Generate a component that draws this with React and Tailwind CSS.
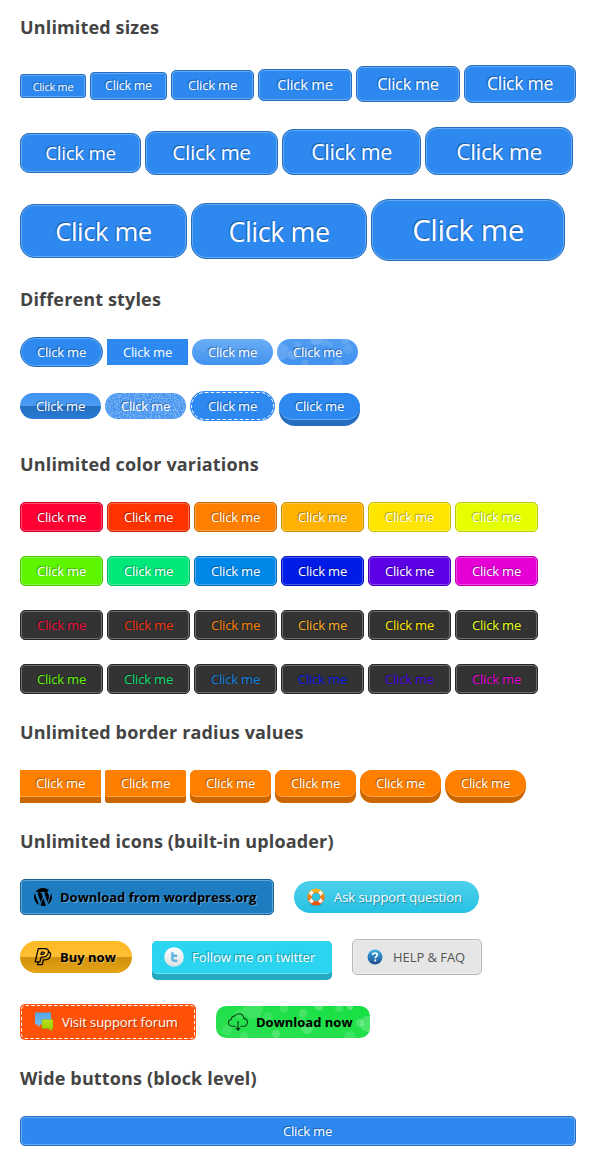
import React from 'react';

const SHADE = '[text-shadow:-1px_-1px_1px_rgba(0,0,0,0.35)]';
const BEVEL = 'border shadow-[inset_0_0_0_1px_rgba(255,255,255,0.28)]';
const BLUE = 'bg-[#2d89ef] border-[#246ebf] text-white';
const TIGHT = 'tracking-[-0.014em]';

function Heading({ children }) {
  return (
    <h2 className="mt-[26px] mb-[26px] h-6 whitespace-nowrap text-[18px] leading-6 font-bold tracking-[0.15px] text-[#444444]">
      {children}
    </h2>
  );
}

function Button({ className = '', align = 'justify-center', label = 'Click me', shade = SHADE, tracking = TIGHT, children }) {
  return (
    <button className={`relative flex shrink-0 items-center whitespace-nowrap ${align} ${className}`}>
      {children}
      <span className={`relative pt-[2px] ${tracking} ${shade}`}>{label}</span>
    </button>
  );
}

function RaisedButton({ outer, face, align = 'justify-center', label = 'Click me', shade = SHADE, tracking = TIGHT, children }) {
  return (
    <button className={`flex shrink-0 flex-col items-stretch whitespace-nowrap ${outer}`}>
      <span className={`flex w-full items-center border-b ${align} ${face}`}>
        {children}
        <span className={`pt-[2px] ${tracking} ${shade}`}>{label}</span>
      </span>
    </button>
  );
}

const sizes = [
  [
    'w-[66px] h-6 rounded-[3px] mb-[5px] text-[10.8px]',
    'w-[77px] h-7 rounded-[4px] mb-[3px] pb-[2px] text-[12.4px]',
    'w-[83px] h-[30px] rounded-[5px] mb-[3px] text-[13px]',
    'w-[94px] h-8 rounded-[6px] mb-[2px] pb-[3px] text-[14.7px]',
    'w-[104px] h-9 rounded-[7px] mb-px pb-[1px] text-[16.3px]',
    'w-[112px] h-[38px] rounded-[8px] pb-[3px] text-[17.5px]',
  ],
  [
    'w-[121px] h-10 rounded-[9px] mb-[2px] pb-[2px] text-[18.7px]',
    'w-[133px] h-11 rounded-[10px] pb-[2px] text-[20.8px]',
    'w-[139px] h-[46px] rounded-[11px] pb-[2px] text-[21.4px]',
    'w-[148px] h-12 rounded-[12px] text-[22.7px]',
  ],
  [
    'w-[167px] h-[54px] rounded-[14px] mb-[3px] text-[25.6px]',
    'w-[176px] h-14 rounded-[15px] mb-[2px] text-[26.8px]',
    'w-[194px] h-[62px] rounded-[18px] pb-[2px] text-[29.6px]',
  ],
];

const colors = [
  [
    'bg-[#ff0033] border-[#cc0029] text-white',
    'bg-[#ff3300] border-[#cc2900] text-white',
    'bg-[#ff8000] border-[#cc6600] text-white',
    'bg-[#ffb300] border-[#cc8f00] text-white',
    'bg-[#ffe600] border-[#ccb800] text-white',
    'bg-[#e6ff00] border-[#b8cc00] text-white',
  ],
  [
    'bg-[#5ef500] border-[#4bc400] text-white',
    'bg-[#00e87a] border-[#00ba62] text-white',
    'bg-[#0088e8] border-[#006dba] text-white',
    'bg-[#001ce6] border-[#0016b8] text-white',
    'bg-[#5c00e6] border-[#4a00b8] text-white',
    'bg-[#e600d6] border-[#b800ab] text-white',
  ],
  [
    'bg-[#333333] border-[#292929] text-[#f00a37]',
    'bg-[#333333] border-[#292929] text-[#f03210]',
    'bg-[#333333] border-[#292929] text-[#ff8000]',
    'bg-[#333333] border-[#292929] text-[#ffad1a]',
    'bg-[#333333] border-[#292929] text-[#ffe600]',
    'bg-[#333333] border-[#292929] text-[#e6ff1a]',
  ],
  [
    'bg-[#333333] border-[#292929] text-[#5ef500]',
    'bg-[#333333] border-[#292929] text-[#10dd70]',
    'bg-[#333333] border-[#292929] text-[#1083e0]',
    'bg-[#333333] border-[#292929] text-[#101ce6]',
    'bg-[#333333] border-[#292929] text-[#4d05e0]',
    'bg-[#333333] border-[#292929] text-[#e600d6]',
  ],
];

const radii = [
  'rounded-none',
  'rounded-[3px]',
  'rounded-[6px]',
  'rounded-[8px]',
  'rounded-[12px]',
  'rounded-[18px]',
];

function Bubbles({ width, height, circles, className }) {
  return (
    <svg className={`absolute inset-0 ${className}`} width={width} height={height} viewBox={`0 0 ${width} ${height}`}>
      {circles.map(([cx, cy, r, o]) => (
        <circle key={`${cx}-${cy}`} cx={cx} cy={cy} r={r} fill="#fff" opacity={o} />
      ))}
    </svg>
  );
}

function Stitches({ width, height, radius }) {
  return (
    <svg className="absolute inset-0" width={width} height={height} fill="none">
      <rect
        x="1.5"
        y="1.5"
        width={width - 3}
        height={height - 3}
        rx={radius}
        stroke="#fff"
        strokeDasharray="3.500 2.200"
      />
    </svg>
  );
}

function Grain() {
  return (
    <svg className="absolute inset-0 rounded-full" width="81" height="26">
      <filter id="grain" x="0" y="0" width="100%" height="100%">
        <feTurbulence type="fractalNoise" baseFrequency="0.75" numOctaves="2" seed="4" />
        <feColorMatrix values="0 0 0 0 1  0 0 0 0 1  0 0 0 0 1  1.3 0 0 0 -0.56" />
      </filter>
      <rect width="81" height="26" filter="url(#grain)" />
    </svg>
  );
}

function WordPress() {
  return (
    <svg className="mr-2 shrink-0" width="18" height="18" viewBox="43 43 426 426" fill="#000">
      <path d="M61.7 169.4l101.5 278C92.2 413 43.3 340.2 43.3 256c0-30.9 6.6-60.1 18.4-86.6zm337.9 75.9c0-26.3-9.4-44.5-17.5-58.7-10.8-17.5-20.9-32.4-20.9-49.9 0-19.6 14.8-37.8 35.7-37.8.9 0 1.8.1 2.8.2-37.9-34.7-88.3-55.9-143.7-55.9-74.3 0-139.7 38.1-177.8 95.9 5 .2 9.7.3 13.7.3 22.2 0 56.7-2.7 56.7-2.7 11.5-.7 12.8 16.2 1.4 17.5 0 0-11.5 1.3-24.3 2l77.5 230.4L249.8 247l-33.1-90.8c-11.5-.7-22.3-2-22.3-2-11.5-.7-10.1-18.2 1.3-17.5 0 0 35.1 2.7 56 2.7 22.2 0 56.7-2.7 56.7-2.7 11.5-.7 12.8 16.2 1.4 17.5 0 0-11.5 1.3-24.3 2l76.9 228.7 21.2-70.9c9-29.400 16-50.500 16-68.700zm-139.900 29.300l-63.800 185.500c19.100 5.600 39.200 8.700 60.100 8.700 24.800 0 48.500-4.300 70.600-12.100-.6-.9-1.100-1.900-1.500-2.900l-65.400-179.200zm183-120.700c.9 6.800 1.400 14 1.400 21.900 0 21.600-4 45.800-16.200 76.200l-65 187.900C426.200 403 468.700 334.500 468.700 256c0-37-9.400-71.800-26-102.100z" />
    </svg>
  );
}

function Lifebuoy() {
  return (
    <svg className="mr-[9px] shrink-0" width="18" height="18" viewBox="1 1 18 18" fill="none">
      <defs>
        <linearGradient id="buoy" x1="0" y1="0" x2="0" y2="1">
          <stop offset="0" stopColor="#fbb21c" />
          <stop offset="1" stopColor="#e8540c" />
        </linearGradient>
      </defs>
      <ellipse cx="10" cy="18" rx="7" ry="1.2" fill="#0b7f99" opacity=".35" />
      <circle cx="10" cy="10" r="6.4" stroke="url(#buoy)" strokeWidth="4.4" />
      <path d="M4.200 4.900 7.100 7.800M12.900 12.200 15.800 15.100M15.800 4.900 12.900 7.800M7.100 12.200 4.200 15.100" stroke="#f4f4f2" strokeWidth="4" />
      <circle cx="10" cy="10" r="4.100" fill="#2fc6e3" stroke="#a8662c" strokeWidth=".5" />
    </svg>
  );
}

function PayPal() {
  return (
    <svg className="mr-2 shrink-0" width="18" height="20" viewBox="0 0 18 20" fill="none" stroke="#000" strokeWidth="1.250" strokeLinejoin="round">
      <path d="M4.300 1.600h6.600c2.700 0 3.900 1.500 3.500 3.900-.5 3-2.500 4.600-5.700 4.600H7.100L6 14.900H1.200z" />
      <path d="M7.500 5.100h1.700c1 0 1.300.4 1.100 1.100-.2.9-.8 1.200-1.800 1.200H7z" />
      <path d="M14.600 4.600c1.700.6 2.300 1.900 1.900 3.800-.6 2.900-2.500 4.400-5.600 4.400H9.400l-1.100 4.900H3.600l.6-2.700" />
    </svg>
  );
}

function Twitter() {
  return (
    <svg className="mr-2 shrink-0" width="20" height="20" viewBox="0 0 20 20">
      <defs>
        <linearGradient id="bird" x1="0" y1="0" x2="0" y2="1">
          <stop offset="0" stopColor="#fff" />
          <stop offset="1" stopColor="#dcdfe2" />
        </linearGradient>
      </defs>
      <circle cx="10" cy="10" r="9.800" fill="url(#bird)" />
      <path d="M8.400 6.300v5.100c0 1.600.8 2.300 2.400 2.300h1.600M8.400 8.800h3.800" fill="none" stroke="#5fb4e2" strokeWidth="2.400" strokeLinecap="round" />
    </svg>
  );
}

function Help() {
  return (
    <svg className="mr-[10px] shrink-0" width="16" height="16" viewBox="0 0 16 16">
      <defs>
        <linearGradient id="help" x1="0" y1="0" x2="0" y2="1">
          <stop offset="0" stopColor="#45b0e6" />
          <stop offset=".5" stopColor="#2a7dbd" />
          <stop offset="1" stopColor="#1c4f86" />
        </linearGradient>
      </defs>
      <circle cx="8" cy="8" r="7.500" fill="url(#help)" />
      <path d="M5.700 6.100c0-1.400 1-2.100 2.300-2.100s2.300.8 2.300 1.900c0 1.500-2 1.600-2 3.300" fill="none" stroke="#fff" strokeWidth="1.700" />
      <rect x="7.300" y="10.500" width="1.900" height="1.900" fill="#fff" />
    </svg>
  );
}

function Chat() {
  return (
    <svg className="mr-2 shrink-0" width="20" height="20" viewBox="0 0 20 20">
      <defs>
        <linearGradient id="chatBlue" x1="0" y1="0" x2="0" y2="1">
          <stop offset="0" stopColor="#56a5e6" />
          <stop offset="1" stopColor="#7cc0f0" />
        </linearGradient>
        <linearGradient id="chatGreen" x1="0" y1="0" x2="0" y2="1">
          <stop offset="0" stopColor="#b9e01a" />
          <stop offset="1" stopColor="#97cc05" />
        </linearGradient>
      </defs>
      <path d="M1 .5h16v12H6.500L4 15.500v-3H1z" fill="url(#chatBlue)" />
      <path d="M8 7.500h11v9h-1.200v2.800L14.800 16.500H8z" fill="url(#chatGreen)" stroke="#8aa61a" strokeWidth=".4" />
    </svg>
  );
}

function Cloud() {
  return (
    <svg className="relative mr-[7px] shrink-0" width="22" height="20" viewBox="0 0 22 20" fill="none" stroke="#0d3d17" strokeWidth="1.100" strokeLinecap="round" strokeLinejoin="round">
      <path d="M8.300 14.200H5.400C3 14.200 1.500 12.700 1.500 10.700c0-1.800 1.200-3.200 3-3.400C4.500 4.900 6 3.700 7.800 4c.9-1.500 2.300-2.300 4-2.300 2.800 0 4.800 1.900 5 4.700 2.200.3 3.700 1.700 3.700 3.900 0 2.300-1.600 3.900-3.900 3.900h-2.900" />
      <path d="M11 9.500v7" />
      <path d="M9 16.200h4L11 18.400z" fill="#0d3d17" />
    </svg>
  );
}

const blueBubbles = [
  [4, 13, 8, 0.14], [16, 16, 5, 0.17], [21, 6, 3.5, 0.12], [28, 24, 3.5, 0.12], [39, 0, 6, 0.17],
  [47, 3, 4, 0.1], [53, 5, 3, 0.1], [68, 1, 4, 0.12], [71, 10, 5, 0.1], [61, 25, 5, 0.12],
];
const greenBubbles = [
  [11, 24, 5, 0.1], [24, 8, 5, 0.1], [28, 30, 4, 0.13], [37, 3, 10, 0.13], [52, 11, 5, 0.1],
  [60, 28, 4, 0.2], [68, 3, 4, 0.13], [87, 7, 4, 0.18], [91, 22, 6, 0.2], [103, 0, 4.5, 0.24],
  [86, 14, 3, 0.13], [123, 2, 4, 0.16], [134, 1, 3, 0.28], [134, 31, 6, 0.13], [144, 17, 4, 0.2],
  [152, 18, 8, 0.2],
];

export default function App() {
  return (
    <main className="flow-root h-[1166px] w-[596px] overflow-hidden bg-white px-5 font-['Open_Sans','Noto_Sans',sans-serif] text-[13px]">
      <section className="-mt-[11px] flow-root">
        <Heading>Unlimited sizes</Heading>
        <div className="flex flex-col gap-6">
          {sizes.map((row, i) => (
            <div key={i} className="flex items-end gap-1">
              {row.map((size) => (
                <Button key={size} className={`${BLUE} ${BEVEL} ${size}`} />
              ))}
            </div>
          ))}
        </div>
      </section>

      <Heading>Different styles</Heading>
      <div className="flex items-center gap-1">
        <Button className={`${BLUE} ${BEVEL} h-[30px] w-[83px] rounded-full`} />
        <Button className="h-[26px] w-[81px] bg-[#2d89ef] text-white" shade="" />
        <Button className="h-[26px] w-[81px] rounded-full bg-linear-to-b from-[#6aadf5] to-[#4292f0] text-white" />
        <Button className="h-[26px] w-[81px] rounded-full bg-linear-to-b from-[#4f9df2] to-[#4292f0] text-white">
          <Bubbles className="rounded-full" width={81} height={26} circles={blueBubbles} />
        </Button>
      </div>
      <div className="mt-6 flex items-start gap-1">
        <Button className="mt-[2px] h-[26px] w-[81px] rounded-full bg-[linear-gradient(#4094f1_0,#4b9bf2_13px,#246ebf_13px,#297bd7_26px)] text-white" />
        <Button className="mt-[2px] h-[26px] w-[81px] rounded-full bg-[#4494f0] text-white">
          <Grain />
        </Button>
        <Button className="h-[30px] w-[85px] rounded-full bg-[#2d89ef] text-white">
          <Stitches width={85} height={30} radius={13.5} />
        </Button>
        <RaisedButton
          outer="mt-[2px] h-[33px] w-[81px] rounded-[16px] bg-[#246ebf]"
          face="h-[27px] rounded-[14px] border-[#6cacf4] bg-[#2d89ef] text-white"
        />
      </div>

      <Heading>Unlimited color variations</Heading>
      <div className="flex flex-col gap-6">
        {colors.map((row, i) => (
          <div key={i} className="flex gap-1">
            {row.map((color) => (
              <Button key={color} className={`h-[30px] w-[83px] rounded-[5px] ${BEVEL} ${color}`} />
            ))}
          </div>
        ))}
      </div>

      <Heading>Unlimited border radius values</Heading>
      <div className="flex gap-1">
        {radii.map((radius) => (
          <RaisedButton
            key={radius}
            outer={`h-[33px] w-[81px] bg-[#cc6600] ${radius}`}
            face={`h-[27px] border-[#ffa64d] bg-[#ff8000] text-white ${radius}`}
          />
        ))}
      </div>

      <Heading>Unlimited icons (built-in uploader)</Heading>
      <div className="flex flex-col gap-6">
        <div className="flex items-center gap-5">
          <Button
            className="h-9 w-[254px] rounded-[5px] border border-[#17649a] bg-[#1e7dc0] pl-[13px] font-bold text-black shadow-[inset_0_0_0_1px_#62a4d3]"
            align="justify-start"
            label="Download from wordpress.org"
            tracking="tracking-[-0.02px]"
            shade="[text-shadow:1px_1px_0_rgba(255,255,255,0.3)]"
          >
            <WordPress />
          </Button>
          <Button
            className="h-8 w-[185px] rounded-full bg-linear-to-b from-[#4dd0ea] to-[#22c2e4] pl-[13px] text-white"
            align="justify-start"
            label="Ask support question"
            tracking="tracking-[-0.05px]"
            shade="[text-shadow:1px_1px_1px_rgba(0,0,0,0.35)]"
          >
            <Lifebuoy />
          </Button>
        </div>
        <div className="flex items-start gap-5">
          <Button
            className="mt-[2px] h-8 w-28 rounded-full bg-[linear-gradient(#ffb923_0,#ffbe35_16px,#cf920f_16px,#e6a313_32px)] pl-[14px] font-bold text-black"
            align="justify-start"
            label="Buy now"
            tracking="tracking-normal"
            shade="[text-shadow:1px_1px_0_rgba(255,255,255,0.3)]"
          >
            <PayPal />
          </Button>
          <RaisedButton
            outer="mt-[2px] h-[39px] w-[180px] rounded-[5px] bg-[#23aabf]"
            face="h-[33px] rounded-[5px] border-[#6ce3f4] bg-[#2cd5ef] pl-3 text-white"
            align="justify-start"
            label="Follow me on twitter"
            tracking="tracking-[-0.05px]"
          >
            <Twitter />
          </RaisedButton>
          <Button
            className="h-9 w-[130px] rounded-[5px] border border-[#b8b8b8] bg-[#e6e6e6] pl-[14px] text-[#555555] shadow-[inset_0_0_0_1px_#ededed]"
            align="justify-start"
            label="HELP &amp; FAQ"
            tracking="tracking-[-0.05px]"
            shade=""
          >
            <Help />
          </Button>
        </div>
        <div className="flex items-center gap-5">
          <Button
            className="h-9 w-44 rounded-[5px] bg-[#ff5208] pl-[14px] text-white"
            align="justify-start"
            label="Visit support forum"
            tracking="tracking-[-0.08px]"
            shade="[text-shadow:1px_1px_1px_rgba(0,0,0,0.35)]"
          >
            <Stitches width={176} height={36} radius={4} />
            <Chat />
          </Button>
          <Button
            className="h-8 w-[154px] rounded-[10px] bg-linear-to-tr from-[#2be053] to-[#15e042] pl-[11px] font-bold text-black"
            align="justify-start"
            label="Download now"
            tracking="tracking-normal"
            shade=""
          >
            <Bubbles className="rounded-[10px]" width={154} height={32} circles={greenBubbles} />
            <Cloud />
          </Button>
        </div>
      </div>

      <Heading>Wide buttons (block level)</Heading>
      <Button className={`${BLUE} ${BEVEL} h-[30px] w-full rounded-[5px] pl-[19px]`} />
    </main>
  );
}
